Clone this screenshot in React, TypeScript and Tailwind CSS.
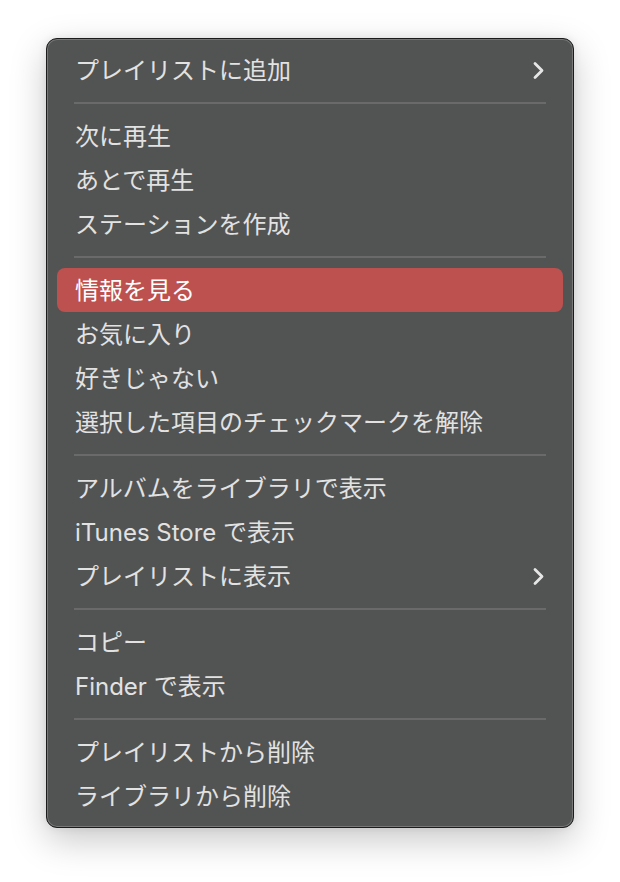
import React from "react";

type Item = { label: string; sub?: boolean; active?: boolean };

const groups: Item[][] = [
  [{ label: "プレイリストに追加", sub: true }],
  [{ label: "次に再生" }, { label: "あとで再生" }, { label: "ステーションを作成" }],
  [
    { label: "情報を見る", active: true },
    { label: "お気に入り" },
    { label: "好きじゃない" },
    { label: "選択した項目のチェックマークを解除" },
  ],
  [
    { label: "アルバムをライブラリで表示" },
    { label: "iTunes Store で表示" },
    { label: "プレイリストに表示", sub: true },
  ],
  [{ label: "コピー" }, { label: "Finder で表示" }],
  [{ label: "プレイリストから削除" }, { label: "ライブラリから削除" }],
];

const Chevron = () => (
  <svg width="13" height="19" viewBox="0 0 13 19" fill="none">
    <path
      d="M3 2.5 L10 9.5 L3 16.5"
      stroke="#e6e6e6"
      strokeWidth="2.8"
      strokeLinecap="round"
      strokeLinejoin="round"
    />
  </svg>
);

const MenuRow = ({ item }: { item: Item }) => (
  <div
    className={`flex h-[44px] items-center justify-between rounded-[8px] pl-[18px] pr-[18px] ${
      item.active ? "bg-[#bd5150] text-white" : "text-[#e2e2e2]"
    }`}
  >
    <span className="pt-[1px]">{item.label}</span>
    {item.sub && <Chevron />}
  </div>
);

export default function App() {
  return (
    <div
      className="min-h-screen bg-white pt-[38px] pl-[46px]"
      style={{ fontFamily: 'Inter, "Noto Sans CJK JP", sans-serif' }}
    >
      <div className="w-[528px] rounded-[11px] border border-[#1c1c1c] bg-[#525353] px-[10px] py-[9px] text-[24px] shadow-[inset_0_0_0_1px_rgba(255,255,255,0.22),0_12px_36px_rgba(0,0,0,0.22),0_0_8px_rgba(0,0,0,0.08)]">
        {groups.map((g, gi) => (
          <div key={gi}>
            {gi > 0 && (
              <div className="flex h-[22px] items-center px-[17px]">
                <div className="h-[2px] w-full bg-[#6a6a6a]" />
              </div>
            )}
            {g.map((item) => (
              <MenuRow key={item.label} item={item} />
            ))}
          </div>
        ))}
      </div>
    </div>
  );
}
